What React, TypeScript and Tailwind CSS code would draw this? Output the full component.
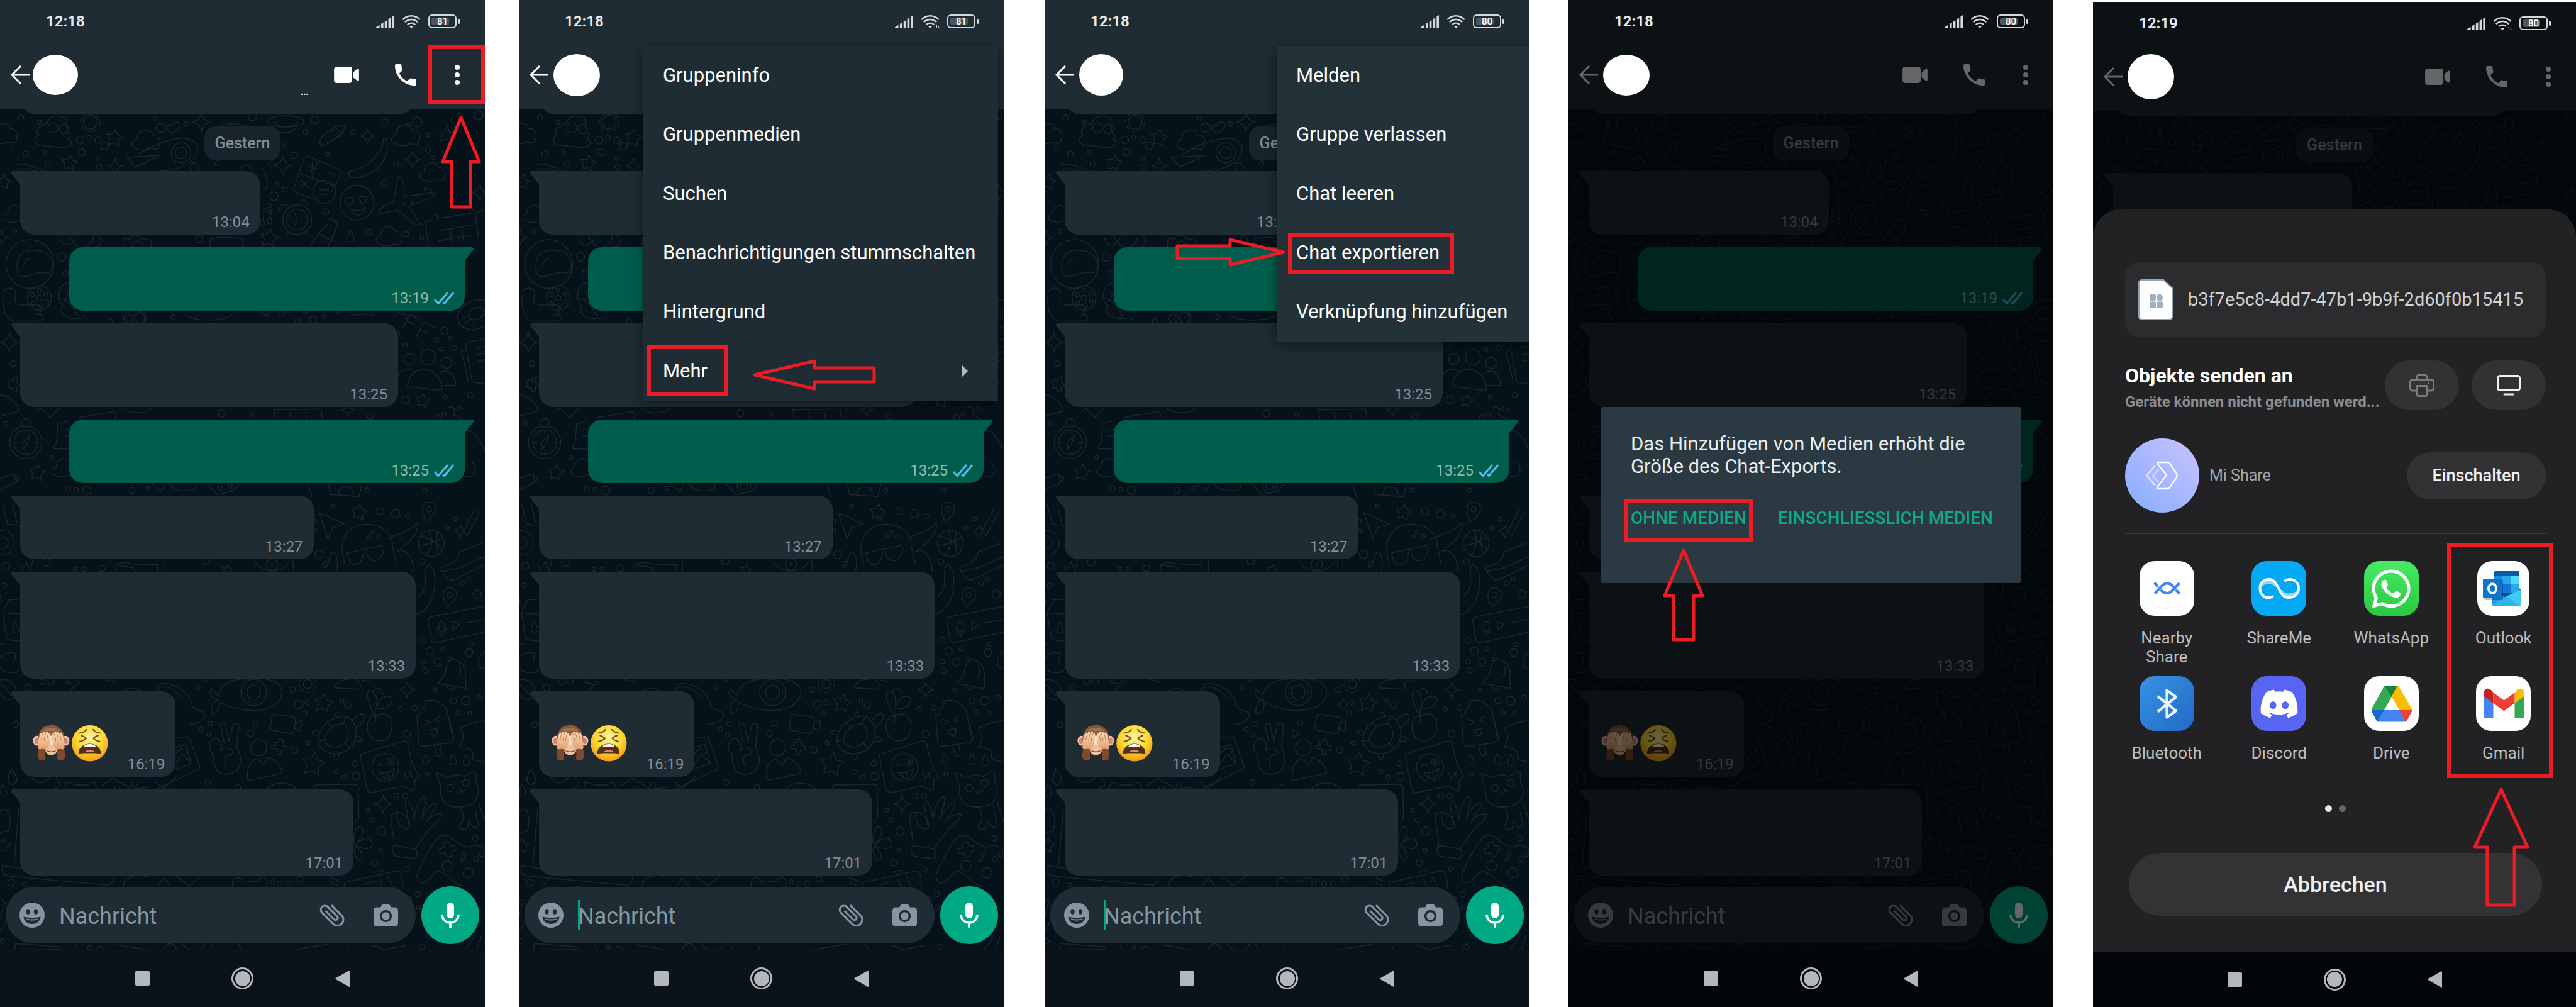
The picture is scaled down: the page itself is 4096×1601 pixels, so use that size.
import React, { useId } from "react";
import { FaDiscord, FaWhatsapp } from "react-icons/fa";

/* ---------- Chat wallpaper ---------- */

type Pt = number[];

const starPoints = (x: number, y: number, r: number) => {
  const pts: string[] = [];
  for (let i = 0; i < 10; i++) {
    const a = -Math.PI / 2 + 0.15 + (i * Math.PI) / 5;
    const k = i % 2 === 0 ? r : r * 0.52;
    pts.push(`${(x + Math.cos(a) * k).toFixed(1)},${(y + Math.sin(a) * k).toFixed(1)}`);
  }
  return pts.join(" ");
};

const Star = ({ p }: { p: Pt }) => <polygon points={starPoints(p[0], p[1], p[2])} />;

const Spark = ({ p }: { p: Pt }) => {
  const [x, y, r] = p;
  const k = r * 0.14;
  return (
    <path
      d={`M${x} ${y - r}Q${x + k} ${y - k} ${x + r} ${y}Q${x + k} ${y + k} ${x} ${y + r}Q${x - k} ${y + k} ${x - r} ${y}Q${x - k} ${y - k} ${x} ${y - r}Z`}
    />
  );
};

const Cloud = ({ p }: { p: Pt }) => (
  <path
    transform={`translate(${p[0]} ${p[1]}) scale(${p[2] / 90})`}
    d="M-32 28C-52 26-48 0-30 0C-32-32 10-44 20-14C36-20 50 6 40 16C44 30 24 34 14 26C4 34-18 36-32 28Z"
  />
);

const Drop = ({ p }: { p: Pt }) => (
  <path
    transform={`translate(${p[0]} ${p[1]}) scale(${p[2] / 20})`}
    d="M-4-20C8-6 14 4 10 14C4 24-12 22-12 8C-12-2-6-10-4-20Z"
  />
);

const Pin = ({ p }: { p: Pt }) => (
  <g transform={`translate(${p[0]} ${p[1]}) rotate(12)`}>
    <path d="M0 34C-30 4-26-26 0-26C26-26 30 4 0 34Z" />
    <circle cx={0} cy={-4} r={8} />
  </g>
);

const Face = ({ p, children }: { p: Pt; children?: React.ReactNode }) => (
  <g transform={`translate(${p[0]} ${p[1]})`}>
    <circle r={p[2]} />
    {children}
  </g>
);

const upperDots: Pt[] = [
  [67, 366, 8], [125, 380, 6], [492, 368, 6], [510, 398, 14], [590, 385, 6], [802, 362, 14], [1000, 374, 12],
  [970, 412, 7], [1222, 380, 10], [1298, 388, 6], [1325, 380, 15], [1462, 362, 8], [1520, 358, 14], [1120, 411, 7],
  [255, 436, 12], [283, 429, 7], [312, 437, 10], [260, 474, 11], [82, 480, 9], [142, 474, 6], [152, 512, 8],
  [332, 455, 12], [310, 493, 6], [315, 520, 9], [618, 521, 14], [690, 508, 7], [905, 455, 7], [933, 484, 9],
  [862, 512, 9], [1040, 480, 6], [1358, 421, 6], [1360, 465, 9], [1375, 490, 6], [1258, 512, 8], [880, 574, 6],
  [870, 611, 13], [904, 591, 8], [855, 640, 7], [1035, 659, 9], [1220, 569, 9], [1172, 722, 9], [1290, 730, 8],
  [1340, 740, 6], [632, 744, 11], [48, 720, 6], [196, 800, 13], [209, 850, 8], [350, 1000, 8], [550, 987, 7],
  [895, 974, 10], [945, 998, 8], [970, 970, 6], [994, 996, 11], [1030, 985, 6], [1075, 970, 6], [1412, 1031, 12],
  [1387, 1057, 6], [1442, 1083, 8], [1402, 1087, 6], [1430, 1053, 6], [1262, 1040, 8], [1287, 1074, 6],
  [42, 1132, 9], [1493, 1230, 8], [1415, 1237, 6], [1287, 1245, 12], [704, 1287, 11], [800, 1290, 6],
  [20, 1318, 6], [165, 1425, 6], [54, 1489, 7], [216, 1521, 8], [276, 1527, 13], [242, 1525, 7], [1165, 1527, 7],
  [1350, 1527, 7], [420, 1527, 9], [470, 1520, 6], [1410, 1290, 6], [1390, 1300, 9], [1176, 1297, 9],
];

const lowerDots: Pt[] = [
  [1208, 24, 11], [1257, 32, 13], [1294, 40, 7], [1447, 48, 6], [1420, 75, 6], [1013, 158, 13], [1035, 187, 7],
  [1056, 8, 5], [1000, 55, 6], [1000, 85, 6], [1340, 180, 9], [148, 183, 12], [20, 195, 12], [323, 202, 10],
  [238, 205, 6], [265, 205, 7], [655, 180, 11], [15, 255, 7], [1468, 248, 8], [1516, 282, 13], [1488, 235, 6],
  [1345, 426, 9], [1405, 452, 6], [1365, 460, 12], [1345, 492, 7], [1350, 520, 8], [1390, 494, 12], [1428, 484, 6],
  [1490, 464, 12], [1497, 438, 7], [1383, 580, 5], [628, 573, 7], [930, 580, 8], [655, 550, 6], [88, 573, 10],
  [135, 555, 9], [162, 553, 10], [948, 626, 13], [976, 620, 7], [968, 651, 7], [1087, 615, 6], [1106, 629, 9],
  [1272, 640, 7], [1318, 636, 8], [1440, 614, 10], [1480, 614, 14], [1523, 603, 7], [1492, 652, 6], [1455, 650, 7],
  [1293, 717, 11], [668, 685, 7], [640, 703, 7], [663, 720, 6], [812, 685, 8], [796, 715, 10], [979, 745, 6],
  [937, 767, 10], [1068, 834, 7], [1092, 852, 7], [1131, 849, 12], [1127, 810, 8], [1356, 843, 6], [660, 867, 8],
  [756, 883, 9], [427, 875, 8], [372, 887, 8], [1259, 909, 8], [1288, 911, 8], [1169, 955, 6], [1184, 986, 7],
  [1211, 1020, 13], [1209, 1080, 6], [1190, 1119, 10], [1290, 1138, 7], [1510, 1042, 8], [1512, 1107, 8],
  [1420, 1128, 16], [1487, 1150, 16], [1530, 1092, 7], [35, 1181, 11], [78, 1187, 7], [953, 1170, 10],
  [915, 1184, 8], [888, 1184, 8], [866, 1178, 7], [1328, 1216, 8], [1300, 1230, 7], [1330, 1258, 6], [7, 1363, 7],
  [1362, 1345, 9], [1340, 1380, 8], [284, 1382, 6], [318, 1388, 10], [50, 688, 9],
];

function Wallpaper() {
  return (
    <svg
      aria-hidden="true"
      className="absolute inset-0 h-full w-full"
      viewBox="0 174 771 1336"
      preserveAspectRatio="xMidYMin slice"
      fill="none"
      stroke="#1a272e"
      strokeWidth={3}
      strokeLinejoin="round"
      strokeLinecap="round"
    >
      <g transform="scale(.5006 .5106)">
        {upperDots.map((d, i) => (
          <circle key={i} cx={d[0]} cy={d[1]} r={d[2]} />
        ))}
        {[[363, 430, 28], [220, 508, 26], [12, 567, 24], [855, 742, 30], [1418, 420, 26], [118, 1472, 26], [1341, 1248, 22]].map((p, i) => (
          <Star key={i} p={p} />
        ))}
        {[[640, 380, 30], [365, 517, 24], [898, 515, 30], [1168, 424, 22], [1310, 497, 26], [30, 1066, 32], [1105, 1276, 20], [5, 740, 22], [1525, 600, 26]].map((p, i) => (
          <Spark key={i} p={p} />
        ))}
        {[[12, 415, 90], [465, 435, 90], [1290, 420, 92], [1375, 535, 82], [1237, 735, 84], [50, 665, 74], [205, 1455, 80]].map((p, i) => (
          <Cloud key={i} p={p} />
        ))}
        <Drop p={[40, 467, 10]} />
        <Drop p={[1115, 735, 18]} />
        {/* swirl, gear, heart, ringed planet */}
        <path d="M150 384C160 350 200 360 212 372C206 388 216 400 212 412C232 420 220 434 214 434C240 440 224 462 200 460L130 452C104 448 104 424 124 422C104 404 130 390 150 384Z" />
        <circle cx={168} cy={398} r={16} />
        <circle cx={203} cy={402} r={15} />
        <circle cx={287} cy={380} r={22} />
        <circle cx={287} cy={380} r={30} strokeDasharray="14 9" />
        <path d="M545 415C520 395 532 384 546 392C554 374 574 378 572 390C572 404 556 412 545 415Z" />
        <ellipse cx={907} cy={378} rx={58} ry={18} />
        <path d="M870 378C880 398 930 402 946 378M870 394C884 420 930 420 942 394" />
        {/* pan, pizza slice */}
        <path d="M440 480C500 440 600 410 625 450C640 500 580 540 450 534M404 490L508 484L430 520Z" />
        <circle cx={575} cy={476} r={31} />
        <circle cx={575} cy={476} r={18} />
        <path d="M700 394C730 380 760 386 780 394M760 530C780 500 800 510 800 540M830 520C860 560 850 600 826 600M50 514C70 500 130 530 146 534M60 528C80 520 100 530 120 534" />
        {/* hot dog, banana */}
        <path d="M1020 454C1000 430 1060 390 1090 390C1110 400 1050 450 1020 454ZM1050 414L1070 400M1060 424L1082 406M1072 430L1092 412" />
        <path d="M1218 430C1216 470 1180 520 1110 534C1100 548 1120 556 1140 552C1210 540 1240 480 1228 432Z" />
        {/* calculator */}
        <path d="M970 488C975 484 980 486 984 488L1078 528C1086 532 1086 536 1084 542L1052 600M996 620L940 600C932 596 932 590 934 584L966 492M950 540L1066 580M1010 500L988 560M976 518L1006 526M992 506L990 538M1040 534L1064 544M954 560L980 584M980 558L956 584" />
        <circle cx={1030} cy={597} r={36} />
        <path d="M1016 590L1044 592M1014 604L1042 606" />
        <Face p={[1134, 631, 54]}>
          <path d="M-24 12C-46-4-38-18-26-12C-18-22-4-16-24 12ZM18 6C2-14 8-24 18-18C28-28 40-12 18 6ZM-18 20C0 28 14 24 26 14C26 44-8 48-18 20Z" />
        </Face>
        {/* airplane */}
        <path d="M1264 552C1276 540 1286 580 1284 612L1350 604L1380 598C1386 606 1370 618 1356 620L1300 644L1336 698L1320 700L1262 654L1206 666C1196 660 1204 646 1250 628ZM1350 604L1348 586L1368 590L1372 600" />
        <circle cx={1286} cy={636} r={4} />
        <circle cx={1310} cy={630} r={4} />
        {/* alarm clock, notes, bottle */}
        <circle cx={944} cy={684} r={46} />
        <circle cx={944} cy={684} r={33} />
        <path d="M936 662L944 684L934 704M888 654C884 640 904 632 914 640M956 630C960 616 974 622 976 636M918 724L910 734M972 724L978 734" />
        <path d="M836 690L838 648L862 656L858 684M838 656L862 664" />
        <ellipse cx={834} cy={694} rx={7} ry={9} />
        <ellipse cx={856} cy={688} rx={7} ry={9} />
        <path d="M1046 684L1070 694L1066 720L1040 770M1040 684C1048 674 1064 680 1070 694M1042 696L1012 726L984 770M1012 726L1052 750" />
        <Drop p={[1028, 742, 12]} />
        {/* calendar */}
        <path d="M1350 690L1376 684M1390 680L1500 664M1350 690L1362 770M1510 664L1536 654M1510 664L1520 740M1376 672C1382 660 1390 664 1390 684M1490 656C1496 644 1504 650 1506 664M1390 720L1500 700M1394 750L1500 732M1430 714L1436 770M1466 706L1474 760" />
        {/* planet and helmet */}
        <circle cx={95} cy={822} r={76} />
        <path d="M60 800C80 770 120 780 140 784C172 800 176 850 150 850C110 840 70 880 56 850C52 830 54 810 60 800ZM74 826C80 812 84 806 96 804" />
        <circle cx={125} cy={928} r={38} />
        {[[125, 928, 9], [104, 918, 6], [124, 904, 6], [146, 916, 6], [148, 938, 6], [130, 952, 6], [106, 944, 6]].map((c, i) => (
          <circle key={i} cx={c[0]} cy={c[1]} r={c[2]} />
        ))}
        <path d="M12 910C20 890 50 896 50 910L48 940M10 920C8 960 16 990 40 1000L120 1000C146 996 140 980 120 980M60 950L120 950C140 956 130 980 110 980" />
        <path d="M214 880C180 890 180 940 200 950C180 980 230 1000 250 990C240 970 220 930 190 930M206 906C220 910 214 930 204 934M254 992C264 986 280 990 278 996" />
        <path d="M190 740C200 780 236 760 240 740M220 734C230 760 260 780 270 768C290 760 300 740 296 732M310 734C330 750 320 770 300 768M392 740L390 768M392 742L412 744C420 728 444 730 446 742L482 748L480 768M420 768C424 744 448 744 452 768" />
        <circle cx={408} cy={992} r={14} />
        <circle cx={446} cy={990} r={18} />
        <path d="M392 992C400 1010 416 1012 418 1000M440 970C464 976 462 1000 450 1010" />
        <path d="M670 744C680 736 760 740 774 744L770 768M668 744L666 768M590 980C610 1000 700 1004 740 980M832 970C840 990 860 980 856 970M1110 975C1130 990 1170 970 1186 984" />
        {/* balloons, donut, notes sheet */}
        <path d="M1250 990C1270 960 1300 980 1290 1000M1280 1020L1302 980L1332 992M1292 1000L1316 1010M1322 1050L1344 1004L1382 1020M1334 1028L1358 1038" />
        <ellipse cx={1512} cy={980} rx={60} ry={44} transform="rotate(-20 1512 980)" />
        <ellipse cx={1512} cy={976} rx={26} ry={18} transform="rotate(-20 1512 976)" />
        <path d="M1470 984L1480 990M1480 1004L1490 998M1500 1016L1508 1008M1540 1056L1500 1062C1484 1064 1478 1074 1480 1084L1500 1190L1540 1196M1510 1084L1540 1078M1516 1104L1540 1100M1520 1124L1540 1120M1474 1090L1466 1094L1490 1198" />
        {/* people */}
        <circle cx={1360} cy={1112} r={24} />
        <circle cx={1300} cy={1118} r={17} />
        <circle cx={1418} cy={1130} r={17} />
        <path d="M1294 1204C1300 1130 1400 1130 1404 1216L1300 1204M1260 1184C1266 1148 1300 1140 1320 1160M1396 1164C1420 1140 1450 1170 1448 1200L1404 1200" />
        {/* plaster, compass, bubble */}
        <path d="M24 1206L30 1196L24 1190L34 1180L42 1188L44 1174L56 1176L52 1190L64 1198L52 1206L54 1220L42 1220L40 1210ZM0 1230C30 1230 60 1260 60 1280L0 1296M130 1270L160 1300L190 1270M120 1280L130 1270" />
        <circle cx={82} cy={1377} r={51} />
        <circle cx={82} cy={1377} r={38} />
        <circle cx={82} cy={1318} r={14} />
        <path d="M72 1378L96 1354L88 1376L74 1400ZM82 1342V1350M82 1404V1412M48 1378H56M108 1378H116" />
        <path d="M218 1310L184 1320L178 1382C168 1390 168 1396 174 1398L214 1398M250 1300L360 1282C370 1284 370 1296 364 1308M220 1336L200 1340M220 1356L200 1360" />
        <path d="M390 1272C410 1290 460 1290 480 1272M0 1490L40 1476C60 1480 60 1500 46 1504L0 1526M870 1272L874 1304M870 1276L1020 1274L1024 1304M920 1284L924 1304M970 1284L974 1304M1424 1270C1440 1260 1450 1280 1440 1290L1468 1306M1440 1270L1460 1280M1452 1264L1474 1276M1480 1340C1510 1340 1530 1380 1536 1400M1500 1440C1520 1460 1510 1490 1478 1482" />
        <path d="M484 1508L512 1530L524 1508M540 1508C560 1540 640 1530 620 1508M660 1508L690 1540L740 1530L760 1508M980 1508L990 1546M1044 1508L1050 1540L1140 1546L1150 1508M1076 1540C1070 1508 1126 1508 1122 1540" />
        <circle cx={715} cy={1512} r={22} />
        <circle cx={715} cy={1512} r={12} />
      </g>
      <g transform="translate(0 800.6) scale(.5006 .5106)">
        {lowerDots.map((d, i) => (
          <circle key={i} cx={d[0]} cy={d[1]} r={d[2]} />
        ))}
        {[[1140, 28, 26], [1027, 622, 30], [995, 812, 38], [8, 1065, 24], [722, 208, 18]].map((p, i) => (
          <Star key={i} p={p} />
        ))}
        {[[1293, 580, 24], [1217, 936, 28]].map((p, i) => (
          <Spark key={i} p={p} />
        ))}
        {[[40, 850, 24], [12, 893, 18], [1354, 796, 16], [1440, 796, 18], [1482, 798, 18], [50, 385, 18]].map((p, i) => (
          <Drop key={i} p={p} />
        ))}
        <Pin p={[1362, 22]} />
        <Pin p={[1428, 288]} />
        {/* ball, paper plane */}
        <circle cx={1370} cy={124} r={41} />
        <path d="M1338 100C1370 110 1400 130 1404 146M1362 84C1380 110 1370 150 1350 160M1334 130C1360 130 1400 110 1404 104M1390 88C1380 120 1390 150 1392 158" />
        <path d="M1014 28L1094 64L1058 74L1042 110Z" />
        {/* friendly monster with sunglasses */}
        <path d="M1096 188C1070 120 1100 66 1166 64C1220 66 1250 100 1246 130L1260 190M1230 110C1270 90 1300 90 1326 60C1330 80 1320 110 1260 150C1300 130 1320 200 1310 212M1360 190C1396 200 1390 330 1320 346M1360 190C1340 210 1370 260 1330 290" />
        <path d="M1100 154L1216 130M1104 156C1106 200 1150 206 1156 150M1164 146C1166 190 1216 190 1220 136" />
        <circle cx={1184} cy={88} r={6} />
        <circle cx={1172} cy={102} r={5} />
        <circle cx={1202} cy={102} r={6} />
        {/* sneaker, ticks */}
        <path d="M1400 200C1420 190 1450 190 1460 150L1530 124M1400 200C1410 230 1430 240 1440 238L1540 190M1404 212L1460 200L1540 164M1448 84L1462 104L1506 20M1462 70L1484 100L1524 26M1446 84L1466 72" />
        {/* cups and curves */}
        <path d="M1028 200C1050 200 1040 150 1060 150C1080 170 1070 200 1070 210M930 170L932 208M810 180C830 220 900 220 920 180M60 190L70 206L84 180L96 210L104 178M368 210C360 180 400 180 420 188L500 190V210M520 180V210M370 190C390 200 420 190 430 210" />
        <circle cx={864} cy={190} r={18} />
        <circle cx={864} cy={190} r={3} />
        {/* gear and book at the left edge */}
        <circle cx={8} cy={122} r={18} />
        <circle cx={8} cy={122} r={38} strokeDasharray="18 10" />
        <path d="M8 0L24 64L60 68M40 2L54 60" />
        {/* milk carton */}
        <path d="M0 284L4 310M62 298L28 300L8 340L22 420C30 428 50 426 62 428M8 340L62 344M0 440L12 436M0 480C20 460 50 460 50 470L44 500M0 510C10 530 50 530 62 520" />
        {/* voice card */}
        <path d="M1540 320L1372 352C1360 356 1358 362 1360 370L1370 424C1372 432 1380 434 1388 432L1540 400M1438 366L1462 378L1438 392ZM1478 372L1540 360" />
        <path d="M1394 376C1394 366 1408 364 1410 374L1412 392C1410 402 1396 400 1396 392ZM1388 386C1390 414 1418 410 1418 384M1404 404V414" />
        {/* bell */}
        <path d="M1392 560L1414 530C1418 500 1424 484 1440 486C1466 490 1482 510 1478 540L1480 576ZM1420 570C1424 582 1440 584 1444 572M1460 506C1466 520 1464 530 1456 540M1540 460C1510 480 1516 520 1540 514" />
        {/* leaves, lightning */}
        <path d="M0 550C20 540 60 560 50 600C40 620 10 610 0 590M0 560L60 620M220 546L206 556L236 562L226 580L256 556L240 554M336 548L370 556M392 584C410 572 440 574 450 586M500 564C540 550 600 580 610 630C620 650 650 640 650 660C640 680 620 690 604 686M498 586C500 566 540 560 580 604" />
        {/* avocado */}
        <path d="M693 600C700 560 740 546 780 546C840 540 896 550 896 590C890 650 780 660 700 620M693 600C670 570 676 580 668 582C666 600 680 610 693 610C670 620 666 650 676 656C694 650 700 640 696 612" />
        <circle cx={806} cy={588} r={41} />
        <circle cx={806} cy={588} r={32} strokeDasharray="2 14" />
        <circle cx={806} cy={588} r={22} />
        <circle cx={977} cy={562} r={14} />
        <circle cx={977} cy={562} r={26} strokeDasharray="10 8" />
        <path d="M1064 574C1070 550 1100 546 1110 548M1064 574L1142 578C1150 560 1140 552 1130 548M1150 550L1174 554" />
        {/* video camera, peace hand, portrait */}
        <path d="M870 656L930 664C938 666 940 672 938 678L934 708C932 716 926 718 920 716L866 706C858 704 858 698 860 690L864 664C864 658 866 656 870 656ZM938 684L958 674L954 708L936 700" />
        <path d="M712 744L700 690C700 680 714 682 716 690L728 740L740 690C746 680 760 684 758 694L752 760C770 790 770 830 730 842C690 850 676 820 678 780C660 770 660 740 680 732C700 730 710 750 700 770M700 770C720 750 750 770 736 780C710 782 710 800 718 820" />
        <circle cx={822} cy={760} r={25} />
        <path d="M788 862C780 820 800 800 816 794L838 814L850 790C880 800 896 820 896 840Z" />
        <path d="M872 742L884 744L888 732L900 738L896 752L910 756L908 768L894 768L892 782L880 780L882 766L864 762L862 752L876 754Z" />
        {/* picture frames */}
        <path d="M560 728L600 726L634 818C634 826 628 828 620 832L500 888M556 760L590 750L608 810L558 826M558 810L580 780L606 806M556 780C580 750 610 760 590 780M490 862L520 888L560 850" />
        {/* turtle */}
        <path d="M1010 740C1010 690 1060 660 1100 662C1140 680 1140 740 1110 764C1070 790 1020 780 1010 740ZM1030 736C1036 706 1060 684 1090 686C1112 700 1110 730 1094 746C1066 766 1040 760 1030 736ZM1066 662C1064 644 1080 646 1080 662M1120 676C1136 650 1160 650 1158 666C1150 690 1140 690 1132 696M1136 724C1160 730 1156 742 1130 740M1060 778C1060 806 1076 800 1078 776M1014 720C990 724 980 706 1010 706M1030 736L1010 740M1054 700L1040 680M1090 686L1100 664M1094 746L1110 762" />
        {/* plant */}
        <path d="M1190 664C1180 640 1160 600 1170 582C1190 580 1200 600 1196 630M1184 590C1194 570 1210 570 1216 592M1196 640C1200 600 1240 590 1246 610C1240 640 1210 640 1192 640L1194 680" />
        <path d="M1194 660C1160 660 1156 720 1190 736C1240 750 1250 700 1244 680C1236 650 1206 650 1194 664" />
        {/* ice lolly */}
        <path d="M1350 614C1390 606 1420 630 1424 660L1442 730C1440 742 1430 744 1420 746L1344 756C1334 754 1330 750 1330 740L1324 660C1336 660 1340 650 1336 640C1350 640 1352 626 1350 614ZM1378 750L1386 784C1394 788 1404 784 1402 776L1396 748M1420 640L1436 720M1348 672L1364 680L1350 690M1394 664L1380 674L1394 680M1360 706L1390 700M1368 706C1370 730 1390 730 1388 702" />
        {/* winking sticker */}
        <path d="M1146 780L1280 740C1290 738 1296 742 1296 752L1310 812L1332 850L1318 860L1316 896L1280 880L1180 900C1170 900 1166 892 1164 882L1146 790ZM1284 836L1290 856M1298 834L1310 852M1290 856L1310 834" />
        <Face p={[1224, 821, 43]}>
          <circle cx={16} cy={-16} r={11} />
          <circle cx={16} cy={-16} r={4} />
          <path d="M-26-4C-20-12-12-10-8-6M-18 16C0 20 16 14 28 4C30 36-4 50-18 16ZM-6 18L-2 34M8 16L12 34" />
        </Face>
        {/* cat */}
        <path d="M1400 880L1386 842C1390 836 1400 844 1420 854C1440 844 1460 842 1474 850L1504 832C1514 834 1510 850 1512 870C1530 900 1516 940 1470 944C1420 950 1396 930 1400 880ZM1460 944C1470 960 1480 990 1460 1000C1456 1014 1470 1016 1484 1012C1490 1000 1484 990 1490 986C1500 1010 1510 1016 1520 1000L1510 960M1520 930L1540 990" />
        <circle cx={1430} cy={886} r={11} />
        <circle cx={1480} cy={870} r={11} />
        <path d="M1450 896C1456 904 1462 900 1462 890C1470 900 1476 896 1476 890" />
        <path d="M1460 700C1480 690 1500 680 1540 676M1460 700C1480 720 1470 740 1460 760C1490 760 1510 770 1500 790C1510 806 1530 800 1540 806" />
        {/* hand */}
        <path d="M1252 1070C1254 1030 1230 970 1250 964C1280 950 1310 990 1300 1010C1280 1020 1260 1000 1260 966M1296 1000C1300 970 1280 930 1290 926C1300 920 1310 950 1316 980C1320 940 1340 910 1350 914C1360 924 1340 960 1340 980C1350 950 1380 926 1386 934C1390 944 1360 980 1356 990C1370 970 1400 960 1404 970C1400 990 1360 1010 1356 1024L1320 1074M1252 1064L1320 1076C1328 1080 1326 1104 1316 1106L1256 1098C1244 1092 1244 1070 1252 1064Z" />
        {/* clover, laptop corner */}
        <path d="M1126 1060C1120 1030 1130 1006 1146 1006C1160 1014 1150 1040 1130 1064C1160 1030 1180 1040 1182 1060C1184 1080 1160 1076 1130 1066C1160 1090 1150 1110 1140 1112C1130 1104 1124 1090 1126 1070M1000 888C990 880 1000 874 1010 876L1124 874C1136 874 1140 880 1138 890L1140 976C1138 986 1130 990 1124 990M846 890C870 864 920 864 942 890" />
        {/* game pad */}
        <path d="M1324 1160C1340 1120 1370 1060 1396 1036C1430 1020 1450 1070 1490 1070C1500 1060 1530 1064 1540 1080M1324 1160C1330 1190 1350 1190 1380 1150C1410 1130 1440 1190 1470 1190M1408 1060L1424 1052L1430 1066L1444 1066L1446 1080L1434 1086L1434 1098L1420 1102L1414 1088L1398 1090L1396 1076L1410 1072ZM1472 1084L1480 1086L1470 1114L1462 1112Z" />
        {/* clock radio, keyboard, odds and ends below the last message */}
        <path d="M1096 1180L1260 1144C1270 1146 1274 1150 1276 1160L1280 1200M1096 1180L1090 1200M1190 1150C1200 1138 1216 1140 1220 1148M1150 1186L1190 1176M1204 1170L1216 1200M1230 1160L1246 1190" />
        <path d="M60 950L44 1130M0 960C30 930 40 990 26 1020L0 1024M8 1128L240 1160M8 1128C4 1150 10 1156 30 1160L340 1188C354 1188 364 1176 360 1162M392 1194C390 1170 420 1150 466 1162M500 1190L520 1166L540 1190M740 1194C730 1170 760 1150 770 1180L820 1176C830 1150 860 1170 846 1194M560 1160L600 1190L640 1160M1050 1164L1078 1176M1050 1180L1070 1188M180 1194L200 1190" />
        <path d="M180 854C190 870 200 880 172 888M206 890L210 866C240 880 280 880 300 866L310 890M100 850C120 880 140 870 160 852M320 880L360 856L420 890M430 888L470 884" />
        <path d="M0 1230C30 1240 30 1300 0 1330M0 1290L10 1250M46 1390L50 1370L190 1380V1388L70 1386M240 1374L248 1390M370 1374L460 1388M520 1388C530 1360 560 1370 560 1388M580 1370C600 1400 640 1400 650 1372M670 1372L680 1388M760 1372L764 1388M940 1388L1040 1372M1100 1374L1110 1388M1180 1374L1220 1388L1290 1376M1510 1344L1480 1388M1530 1344L1514 1388" />
      </g>
    </svg>
  );
}

/* ---------- Small icons ---------- */

const svgBase = { "aria-hidden": true } as const;

const BackIcon = () => (
  <svg {...svgBase} viewBox="0 0 32 32" className="h-8 w-8" fill="none" stroke="currentColor" strokeWidth={3}>
    <path d="M31 16H3M17 2L3 16L17 30" />
  </svg>
);

const VideoIcon = () => (
  <svg {...svgBase} viewBox="0 0 168 110" className="h-[26px] w-10" fill="currentColor">
    <rect width={122} height={110} rx={18} />
    <path d="M129 38L154 17C160 13 168 14 168 22V88C168 96 160 98 154 92L129 73Z" />
  </svg>
);

const PhoneIcon = () => (
  <svg {...svgBase} viewBox="3 3 18 18" className="h-[34px] w-[34px]" fill="currentColor">
    <path d="M6.62 10.79c1.44 2.83 3.76 5.14 6.59 6.59l2.2-2.2c.27-.27.67-.36 1.02-.24 1.12.37 2.33.57 3.57.57.55 0 1 .45 1 1V20c0 .55-.45 1-1 1-9.39 0-17-7.61-17-17 0-.55.45-1 1-1h3.5c.55 0 1 .45 1 1 0 1.25.2 2.45.57 3.57.11.35.03.74-.25 1.02l-2.2 2.2z" />
  </svg>
);

const MoreIcon = () => (
  <svg {...svgBase} viewBox="0 0 8 32" className="h-8 w-2" fill="currentColor">
    <circle cx={4} cy={4} r={4} />
    <circle cx={4} cy={16} r={4} />
    <circle cx={4} cy={28} r={4} />
  </svg>
);

const SmileIcon = () => (
  <svg {...svgBase} viewBox="0 0 40 40" className="h-10 w-10 shrink-0">
    <circle cx={20} cy={20} r={20} fill="#8696a0" />
    <ellipse cx={13.5} cy={14.5} rx={3.2} ry={4.2} fill="#1f2c34" />
    <ellipse cx={26} cy={14.5} rx={3.2} ry={4.2} fill="#1f2c34" />
    <path d="M6.5 22.5C15 24.5 25 24.5 33.5 22.5C33 29.5 27.5 34 20 34C12.5 34 7 29.5 6.5 22.5Z" fill="#1f2c34" />
    <path d="M10 25.5C16 26.8 24 26.8 30 25.5C27.5 29.5 12.5 29.5 10 25.5Z" fill="#8696a0" />
  </svg>
);

const ClipIcon = () => (
  <svg {...svgBase} viewBox="0 0 24 24" className="h-12 w-12" fill="#8696a0">
    <path
      transform="rotate(-45 12 12)"
      d="M16.5 6v11.5c0 2.21-1.79 4-4 4s-4-1.79-4-4V5c0-1.38 1.12-2.5 2.5-2.5s2.5 1.12 2.5 2.5v10.5c0 .55-.45 1-1 1s-1-.45-1-1V6H10v9.5c0 1.38 1.12 2.5 2.5 2.5s2.5-1.12 2.5-2.5V5c0-2.21-1.79-4-4-4S7 2.79 7 5v12.5c0 3.04 2.46 5.5 5.5 5.5s5.5-2.46 5.5-5.5V6h-1.5z"
    />
  </svg>
);

const CameraIcon = () => (
  <svg {...svgBase} viewBox="0 0 39 36" className="h-9 w-[39px]">
    <path
      fill="#8696a0"
      d="M12 4C13 1.5 14.5 0 17 0H22C24.5 0 26 1.5 27 4L28 5.5H33C37 5.5 39 7.5 39 11V30C39 34 37 36 33 36H6C2 36 0 34 0 30V11C0 7.5 2 5.5 6 5.5H11Z"
    />
    <circle cx={19.5} cy={19.5} r={9.7} fill="#1f2c34" />
    <circle cx={19.5} cy={19.5} r={6.2} fill="#8696a0" />
  </svg>
);

const MicIcon = () => (
  <svg {...svgBase} viewBox="0 0 30 41" className="h-[41px] w-[30px]" fill="none" stroke="white" strokeWidth={3.6}>
    <rect x={9} y={0} width={12} height={25} rx={6} fill="white" stroke="none" />
    <path d="M2 19C2 26.5 7.5 32 15 32C22.5 32 28 26.5 28 19M15 32V41" />
  </svg>
);

const Ticks = () => (
  <svg {...svgBase} viewBox="0 0 32 20" className="h-5 w-8" fill="none" stroke="#53bdeb" strokeWidth={3}>
    <path d="M1 12L7 18.5L22 1M14 16.5L16.5 18.5L31 1" />
  </svg>
);

const Emojis = () => {
  const id = useId();
  return (
    <svg viewBox="98 112 506 252" className="h-[60px] w-[120px]" role="img" aria-label="Affe hält sich die Augen zu, erschöpftes Gesicht">
      <defs>
        <radialGradient id={`${id}f`} cx=".5" cy=".35" r=".65">
          <stop offset="0" stopColor="#fff3a6" />
          <stop offset=".55" stopColor="#fdda32" />
          <stop offset="1" stopColor="#f39a1c" />
        </radialGradient>
        <linearGradient id={`${id}h`} x1="0" y1="0" x2="0" y2="1">
          <stop offset="0" stopColor="#ffdcb4" />
          <stop offset="1" stopColor="#e0a070" />
        </linearGradient>
      </defs>
      <ellipse cx={126} cy={224} rx={26} ry={33} fill="#f6c9a4" />
      <ellipse cx={318} cy={224} rx={26} ry={33} fill="#f6c9a4" />
      <ellipse cx={124} cy={226} rx={15} ry={22} fill="#d98082" />
      <ellipse cx={320} cy={226} rx={15} ry={22} fill="#d98082" />
      <path d="M134 220C130 160 170 120 206 122L222 114L228 120L250 116L246 124C290 132 314 170 310 220C308 280 270 300 222 300C174 300 136 280 134 220Z" fill="#87573a" />
      <path d="M160 160C180 130 250 128 280 158Z" fill="#a3714c" />
      <ellipse cx={222} cy={274} rx={44} ry={46} fill="#f0c198" />
      <path d="M190 286C204 298 240 298 256 286C250 306 196 306 190 286Z" fill="#6d3a22" />
      <path d="M214 190H230L234 250H210Z" fill="#f7e3cd" />
      <path d="M136 282C160 274 184 280 186 286C180 310 182 330 184 346C178 362 144 360 136 344C130 330 132 300 136 282Z" fill="#7d4a2c" />
      <path d="M310 282C286 274 262 280 260 286C266 310 264 330 262 346C268 362 302 360 310 344C316 330 314 300 310 282Z" fill="#7d4a2c" />
      <path
        d="M132 270C136 240 134 200 150 176C156 166 166 170 166 174C170 164 182 162 186 170C192 160 204 164 204 172C212 168 218 176 217 184C216 210 212 240 206 256C198 274 190 284 182 282C166 274 148 286 138 280Z"
        fill={`url(#${id}h)`}
      />
      <path
        d="M312 270C308 240 310 200 294 176C288 166 278 170 278 174C274 164 262 162 258 170C252 160 240 164 240 172C232 168 228 176 229 184C230 210 234 240 240 256C248 274 256 284 264 282C280 274 298 286 308 280Z"
        fill={`url(#${id}h)`}
      />
      <path
        d="M166 176C160 190 156 206 156 218M186 172C180 190 174 206 174 222M204 174C198 190 192 206 192 224M278 176C284 190 288 206 288 218M258 172C264 190 270 206 270 222M240 174C246 190 252 206 252 224"
        stroke="#b77547"
        strokeWidth={4}
        strokeLinecap="round"
        fill="none"
      />
      <circle cx={481} cy={241} r={121} fill={`url(#${id}f)`} />
      <g fill="none" stroke="#6b4a12" strokeLinecap="round" strokeWidth={8}>
        <path d="M412 172C434 172 450 162 460 148M550 172C528 172 512 162 502 148" />
        <path d="M424 190C440 196 452 202 456 208C450 218 430 224 412 230M536 190C520 196 510 202 505 208C510 218 530 224 548 230" strokeWidth={9} />
      </g>
      <path d="M406 312C402 270 440 244 481 244C522 244 558 270 554 312C530 306 500 308 481 308C460 308 430 306 406 312Z" fill="#4d3310" />
      <path d="M436 268C446 250 464 246 481 246C498 246 516 250 524 268C500 264 460 264 436 268Z" fill="#ffffff" />
      <path d="M448 298C458 282 504 280 512 298C500 300 460 300 448 298Z" fill="#f0787c" />
    </svg>
  );
};

/* ---------- Phone parts ---------- */

function StatusBar({ time, battery, data = false }: { time: string; battery: number; data?: boolean }) {
  return (
    <div className="relative z-20 flex h-[68px] items-center justify-between pr-10 pl-[73px] text-[#e6e8e9]">
      <time className="text-2xl leading-6 font-bold">{time}</time>
      <div className="flex items-center gap-3">
        <svg {...svgBase} viewBox="0 0 120 87" className="h-[21px] w-[29px]" fill="#d6d8da">
          <path d="M0 87V80L23 65V87ZM33 87V58L48 48V87ZM57 87V44L72 34V87ZM81 87V28L96 16V87ZM105 87V10L120 0V87Z" />
        </svg>
        <svg {...svgBase} viewBox="0 0 126 90" className="h-[21px] w-[30px]" fill="none" stroke="#d6d8da" strokeWidth={10}>
          <path d="M4 31C38-3 88-3 122 31M20 48C44 24 82 24 106 48M36 65C52 50 74 50 90 65" />
          <path d="M51 78C58 71 68 71 75 78L63 90Z" fill="#d6d8da" stroke="none" />
          {data && <path d="M108 68V86M102 74L108 68M120 90V72M126 84L120 90" strokeWidth={4} />}
        </svg>
        <div className="flex items-center gap-[2px]">
          <div className="relative flex h-[22px] w-[45px] items-center justify-center rounded-md border-2 border-[#d6d8da]">
            <span className="absolute inset-y-[3px] left-[3px] w-7 rounded-sm bg-[#4c575d]" />
            <span className="relative text-[15px] leading-4 font-medium text-white">{battery}</span>
          </div>
          <span className="h-2 w-[3px] rounded-sm bg-[#d6d8da]" />
        </div>
      </div>
    </div>
  );
}

function Toolbar({ avatar, dots = false, actions = true }: { avatar: string; dots?: boolean; actions?: boolean }) {
  return (
    <div className="flex h-[106px] items-center pr-10 pb-1 pl-4 text-white">
      <button type="button" aria-label="Zurück">
        <BackIcon />
      </button>
      <div className={`relative z-20 rounded-[50%] bg-white ${avatar}`} />
      <div className="flex flex-1 justify-end self-end">
        {dots && <span className="mr-10 mb-4 text-xl leading-5">…</span>}
      </div>
      {actions && (
        <>
          <button type="button" aria-label="Videoanruf" className="mr-[57px]">
            <VideoIcon />
          </button>
          <button type="button" aria-label="Anruf" className="mr-[61px]">
            <PhoneIcon />
          </button>
          <button type="button" aria-label="Weitere Optionen">
            <MoreIcon />
          </button>
        </>
      )}
    </div>
  );
}

type Message = { time: string; box: string; sent?: boolean; emoji?: boolean };

const messages: Message[] = [
  { time: "13:04", box: "w-[54%] h-[101px]" },
  { time: "13:19", box: "w-[89%] h-[101px]", sent: true },
  { time: "13:25", box: "w-[85%] h-[133px]" },
  { time: "13:25", box: "w-[89%] h-[101px]", sent: true },
  { time: "13:27", box: "w-[66%] h-[101px]" },
  { time: "13:33", box: "w-[89%] h-[170px]" },
  { time: "16:19", box: "w-[35%] h-[136px]", emoji: true },
  { time: "17:01", box: "w-[75%] h-[137px]" },
];

function Bubble({ m }: { m: Message }) {
  return (
    <li
      className={`relative flex items-end rounded-[22px] px-[17px] pb-2 ${m.box} ${
        m.sent ? "self-end rounded-tr-none bg-[#005d4b]" : "rounded-tl-none bg-[#1f2c34]"
      }`}
    >
      <svg
        {...svgBase}
        viewBox="0 0 14 22"
        className={`absolute top-0 h-[22px] w-[14px] ${m.sent ? "left-full" : "right-full -scale-x-100"}`}
        fill={m.sent ? "#005d4b" : "#1f2c34"}
      >
        <path d="M0 0H11C14 0 15 3 13 5L0 21Z" />
      </svg>
      {m.emoji && (
        <div className="mb-4 ml-[3px]">
          <Emojis />
        </div>
      )}
      <div className="ml-auto flex items-center gap-2">
        <time className={`text-2xl leading-6 ${m.sent ? "text-[#8fb8ae]" : "text-[#818f98]"}`}>{m.time}</time>
        {m.sent && <Ticks />}
      </div>
    </li>
  );
}

function Composer({ cursor = false }: { cursor?: boolean }) {
  return (
    <form className="relative mt-auto flex items-center gap-[9px] px-[9px] pt-4 pb-[9px]" onSubmit={(e) => e.preventDefault()}>
      <div className="flex h-[90px] flex-1 items-center rounded-[45px] bg-[#1f2c34] pr-7 pl-[22px]">
        <SmileIcon />
        <div className="relative ml-[23px] flex-1">
          <input
            type="text"
            aria-label="Nachricht"
            placeholder="Nachricht"
            className="h-12 w-full bg-transparent pt-1 text-4xl leading-10 text-white outline-none placeholder:text-[#8696a0]"
          />
          {cursor && <span className="absolute inset-y-0 left-0 w-1 bg-[#00a884]" />}
        </div>
        <button type="button" aria-label="Anhang" className="mr-[42px]">
          <ClipIcon />
        </button>
        <button type="button" aria-label="Kamera">
          <CameraIcon />
        </button>
      </div>
      <button
        type="button"
        aria-label="Sprachnachricht"
        className="flex h-[92px] w-[92px] items-center justify-center rounded-full bg-[#00a884]"
      >
        <MicIcon />
      </button>
    </form>
  );
}

function NavBar({ look }: { look: string }) {
  return (
    <nav aria-label="System" className={`relative z-20 flex items-center justify-center ${look}`}>
      <button type="button" aria-label="Apps" className="h-[23px] w-[23px] rounded-xs bg-[#b5b8ba]" />
      <button
        type="button"
        aria-label="Startseite"
        className="mx-[130px] flex h-[35px] w-[35px] items-center justify-center rounded-full border-[3px] border-[#b5b8ba]"
      >
        <span className="h-6 w-6 rounded-full bg-[#b5b8ba]" />
      </button>
      <button type="button" aria-label="Zurück">
        <svg {...svgBase} viewBox="0 0 23 26" className="h-[26px] w-[23px]" fill="#b5b8ba">
          <path d="M22 0C23 0 23 1 23 1V25C23 26 22 26 22 26L1 14C0 13 0 13 1 12Z" />
        </svg>
      </button>
    </nav>
  );
}

type PhoneProps = {
  label: string;
  time: string;
  battery: number;
  data?: boolean;
  avatar: string;
  dots?: boolean;
  cursor?: boolean;
  actions?: boolean;
  dim?: boolean;
  covered?: boolean;
  frame?: string;
  nav?: string;
  children?: React.ReactNode;
};

function Phone(p: PhoneProps) {
  const visible = p.covered ? messages.slice(0, 1) : messages;
  return (
    <section aria-label={p.label} className={`relative flex flex-col overflow-hidden bg-[#1f2c34] ${p.frame ?? ""}`}>
      <header>
        <StatusBar time={p.time} battery={p.battery} data={p.data} />
        <Toolbar avatar={p.avatar} dots={p.dots} actions={p.actions} />
      </header>
      <div className="relative flex flex-1 flex-col bg-[#06121a]">
        <Wallpaper />
        <div className="relative -mt-[22px] mr-[114px] ml-[35px] h-[30px] rounded-b-[22px] bg-[#1f2c34]" />
        <div className="relative mt-[19px] flex h-[54px] items-center self-center rounded-[18px] bg-[#18242b] px-[17px] text-[25px] leading-6 font-medium text-[#7f8d96]">
          Gestern
        </div>
        <ul className="relative mx-8 mt-[17px] flex flex-col gap-5">
          {visible.map((m, i) => (
            <Bubble key={i} m={m} />
          ))}
        </ul>
        {!p.covered && <Composer cursor={p.cursor} />}
      </div>
      <NavBar look={p.nav ?? "h-[91px] bg-[#0a131a]"} />
      {p.dim && <div className="absolute inset-0 z-10 bg-black/60" />}
      {p.children}
    </section>
  );
}

/* ---------- Annotations ---------- */

const Frame = ({ at }: { at: string }) => (
  <div aria-hidden="true" className={`pointer-events-none absolute z-40 border-6 border-[#ed1c24] ${at}`} />
);

const Arrow = ({ at, box, points }: { at: string; box: string; points: string }) => (
  <svg
    {...svgBase}
    viewBox={box}
    className={`pointer-events-none absolute z-40 ${at}`}
    fill="none"
    stroke="#ed1c24"
    strokeWidth={5}
    strokeLinejoin="round"
  >
    <polygon points={points} />
  </svg>
);

/* ---------- Menus, dialog, share sheet ---------- */

function Menu({ items, look, more = false }: { items: string[]; look: string; more?: boolean }) {
  return (
    <ul className={`absolute top-[73px] z-30 shadow-[0_6px_18px_rgba(0,0,0,0.45)] ${look}`}>
      {items.map((t, i) => (
        <li key={t}>
          <button
            type="button"
            className="flex h-[94px] w-full items-center justify-between pr-12 pl-[31px] text-left text-[31px] leading-10 whitespace-nowrap text-white"
          >
            {t}
            {more && i === items.length - 1 && (
              <svg {...svgBase} viewBox="0 0 10 20" className="h-5 w-[10px]" fill="#b5bbbf">
                <path d="M0 0L10 10L0 20Z" />
              </svg>
            )}
          </button>
        </li>
      ))}
    </ul>
  );
}

function ExportDialog() {
  return (
    <div
      role="dialog"
      aria-label="Chat exportieren"
      className="absolute top-[647px] right-[51px] left-[51px] z-30 h-[280px] rounded-sm bg-[#2a3942] px-12 pt-[41px]"
    >
      <p className="text-[31px] leading-9 text-[#e9edef]">
        Das Hinzufügen von Medien erhöht die
        <br />
        Größe des Chat-Exports.
      </p>
      <div className="mt-12 flex gap-[50px] text-[28px] leading-8 font-medium whitespace-nowrap text-[#0fa888]">
        <button type="button">OHNE MEDIEN</button>
        <button type="button">EINSCHLIESSLICH MEDIEN</button>
      </div>
    </div>
  );
}

const Tile = ({ look, children }: { look: string; children: React.ReactNode }) => (
  <span className={`flex h-[87px] items-center justify-center overflow-hidden rounded-3xl ${look}`}>{children}</span>
);

const NearbyLogo = () => (
  <svg {...svgBase} viewBox="0 0 87 87" className="h-full w-full" fill="none" stroke="#4285f4" strokeWidth={4.2}>
    <path d="M24 51.5L35 40C40.5 34 47 34 52 39L54 41.5M63.5 35L52.5 46.5C47 52.5 40.5 52.5 35.5 47.5L33.5 45.5M23.5 34.5L29.5 41M57.5 45.5L64 52" />
    <path d="M13 50C18 84 68 84 74 50" stroke="#f1f1f1" strokeWidth={1} />
  </svg>
);

const ShareMeLogo = () => (
  <svg {...svgBase} viewBox="0 0 87 87" className="h-full w-full" fill="none">
    <path d="M14 41C16 30 24 29 28 29C38 29 39 40 44 48C38 34 24 34 14 41Z" fill="#8fd6fb" />
    <path d="M44 42C48 50 50 58 59 58C67 58 74 52 75 44C68 52 54 56 44 42Z" fill="#8fd6fb" />
    <path
      d="M33.5 56.5C22 62 13.5 53 13.5 43.5C13.5 34 20 29 28 29C44 29 42 58 59 58C69 58 75 51 75 43.5C75 32 64 26 54 31"
      stroke="white"
      strokeWidth={4}
      strokeLinecap="round"
    />
  </svg>
);

const OutlookLogo = () => (
  <svg {...svgBase} viewBox="0 0 83 87" className="h-full w-full">
    <path d="M64 42L70 45L64 52Z" fill="#123b6d" />
    <rect x={27} y={16} width={40} height={48} rx={2} fill="#1490df" />
    <path d="M29 16H65C66 16 67 17 67 18V23H27V18C27 17 28 16 29 16Z" fill="#0a5cab" />
    <rect x={40} y={23} width={13} height={14} fill="#28a8ea" />
    <rect x={53} y={23} width={14} height={14} fill="#50d9ff" />
    <rect x={27} y={37} width={13} height={14} fill="#0f5fb3" />
    <rect x={40} y={37} width={13} height={14} fill="#0f78d4" />
    <rect x={53} y={37} width={14} height={14} fill="#28a8ea" />
    <path d="M27 50H67V60H27Z" fill="#0a4f96" />
    <path d="M70 45V69C70 71 69 72 67 72H27C25 72 24 71 24 69V45L47 59Z" fill="#1b9be0" />
    <path d="M70 45V69C70 71 69 72 67 72L44 57Z" fill="#3ccbf4" />
    <path d="M24 69L47 56L68 72H27C25 72 24 71 24 69Z" fill="#2fb3ec" />
    <rect x={11} y={30} width={30} height={32} rx={2} fill="#000000" opacity={0.25} />
    <rect x={9} y={28} width={30} height={31} rx={2} fill="#1173cf" />
    <ellipse cx={24} cy={43.5} rx={6.2} ry={7.4} fill="none" stroke="white" strokeWidth={3.6} />
  </svg>
);

const BluetoothLogo = () => (
  <svg {...svgBase} viewBox="0 0 87 87" className="h-full w-full" fill="none" stroke="#eaf4ff" strokeWidth={4.2}>
    <path d="M29 32L58 55L43.5 65.5V22.5L58 33L29 56.5" strokeLinejoin="round" />
  </svg>
);

const DriveLogo = () => (
  <svg {...svgBase} viewBox="0 0 87 87" className="h-full w-full">
    <path d="M36 15H33.5L32 16L12 52V54H32L44 32.5Z" fill="#34a853" />
    <path d="M34 15H53L54.5 15.5L44 33L33 16Z" fill="#188038" />
    <path d="M53 15L55 16L76 52V54H56L43.7 32.5Z" fill="#fbbc04" />
    <path d="M12 54H32.5L22 72.5L20 71L12 56Z" fill="#1967d2" />
    <path d="M32 54H56.5L66 72.5H22Z" fill="#4285f4" />
    <path d="M56 54H76V56L68 71L66 72.5Z" fill="#ea4335" />
  </svg>
);

const GmailLogo = () => (
  <svg {...svgBase} viewBox="0 0 87 87" className="h-full w-full">
    <path d="M12.5 30L27.5 40V67H16C14 67 12.5 66 12.5 64Z" fill="#4285f4" />
    <path d="M76.5 30L61.5 40V67H73C75 67 76.5 66 76.5 64Z" fill="#34a853" />
    <path d="M61.5 26L65 22C70 17.5 76.5 20 76.5 27V32L61.5 43Z" fill="#fbbc04" />
    <path d="M27.5 26L44.5 38.5L61.5 26V43L44.5 55.5L27.5 43Z" fill="#ea4335" />
    <path d="M27.5 26L24 22C19 17.5 12.5 20 12.5 27V32L27.5 43Z" fill="#c5221f" />
  </svg>
);

const apps: { name: string; tile: React.ReactNode }[] = [
  { name: "Nearby Share", tile: <Tile look="w-[87px] bg-white"><NearbyLogo /></Tile> },
  { name: "ShareMe", tile: <Tile look="w-[87px] bg-[#03a9f4]"><ShareMeLogo /></Tile> },
  {
    name: "WhatsApp",
    tile: (
      <Tile look="w-[87px] bg-linear-to-b from-[#48ea64] to-[#28c840]">
        <FaWhatsapp aria-hidden="true" className="h-[70px] w-[70px] text-white" />
      </Tile>
    ),
  },
  { name: "Outlook", tile: <Tile look="w-[83px] bg-white"><OutlookLogo /></Tile> },
  { name: "Bluetooth", tile: <Tile look="w-[87px] bg-linear-to-br from-[#3693e2] to-[#216ac6]"><BluetoothLogo /></Tile> },
  {
    name: "Discord",
    tile: (
      <Tile look="w-[87px] bg-[#5865f2]">
        <FaDiscord aria-hidden="true" className="h-16 w-16 text-white" />
      </Tile>
    ),
  },
  { name: "Drive", tile: <Tile look="w-[87px] bg-white"><DriveLogo /></Tile> },
  { name: "Gmail", tile: <Tile look="w-[87px] bg-white"><GmailLogo /></Tile> },
];

function ShareSheet() {
  return (
    <div
      role="dialog"
      aria-label="Teilen"
      className="absolute inset-x-0 top-[330px] bottom-[88px] z-30 flex flex-col rounded-t-[44px] bg-[#222224] pt-[83px] pr-12 pb-[57px] pl-[51px]"
    >
      <div className="flex h-[120px] items-center rounded-3xl bg-[#2c2c2e] pr-8 pl-[21px]">
        <svg {...svgBase} viewBox="0 0 55 65" className="h-[65px] w-[55px]">
          <path d="M5 1H40L54 14V60C54 62 52 64 50 64H5C3 64 1 62 1 60V5C1 3 3 1 5 1Z" fill="white" stroke="#8fa5b3" strokeWidth={2} />
          <g fill="#9db2bf">
            <rect x={18} y={24} width={10} height={10} rx={2} />
            <circle cx={34} cy={29} r={5.2} />
            <rect x={18} y={35.5} width={10} height={10} rx={2} />
            <rect x={29} y={35.5} width={10} height={10} rx={2} />
          </g>
        </svg>
        <p className="ml-6 text-[29px] leading-9 whitespace-nowrap text-[#d2d2d3]">b3f7e5c8-4dd7-47b1-9b9f-2d60f0b15415</p>
      </div>

      <div className="mt-[37px] flex h-[79px] items-center">
        <div className="flex-1">
          <h2 className="text-[32px] leading-9 font-bold text-white">Objekte senden an</h2>
          <p className="mt-2 mb-[-8px] text-2xl leading-8 font-bold whitespace-nowrap text-[#8d8d8f]">Geräte können nicht gefunden werd...</p>
        </div>
        <button type="button" aria-label="Drucken" className="flex h-[79px] w-[118px] shrink-0 items-center justify-center rounded-full bg-[#323234]">
          <svg {...svgBase} viewBox="0 0 40 36" className="h-9 w-10" fill="none" stroke="#7b7b7d" strokeWidth={3} strokeLinejoin="round">
            <path d="M11.5 9V4.5C11.5 3 13 1.5 14.5 1.5H25.5C27 1.5 28.5 3 28.5 4.5V9M11.5 26H6C3 26 1.5 24.5 1.5 22V13C1.5 10 3 8.5 6 8.5H34C37 8.5 38.5 10 38.5 13V22C38.5 24.5 37 26 34 26H28.5" />
            <path d="M12 18.5H28V32C28 33.5 27 34.5 25.5 34.5H14.5C13 34.5 12 33.5 12 32ZM29 14.5H32" />
          </svg>
        </button>
        <button type="button" aria-label="Bildschirm" className="ml-5 flex h-[79px] w-[118px] shrink-0 items-center justify-center rounded-full bg-[#323234]">
          <svg {...svgBase} viewBox="0 0 38 33" className="h-[33px] w-[38px]" fill="none" stroke="#f0f0f0" strokeWidth={3} strokeLinecap="round">
            <rect x={1.5} y={1.5} width={35} height={23} rx={3.5} />
            <path d="M12 31H26" />
          </svg>
        </button>
      </div>

      <div className="mt-[45px] flex h-[118px] items-center">
        <span className="flex h-[118px] w-[118px] items-center justify-center rounded-full bg-linear-to-tr from-[#82adff] to-[#c9c3ff]">
          <svg {...svgBase} viewBox="0 0 50 46" className="h-[46px] w-[50px]" fill="none" stroke="white" strokeWidth={2.4} strokeLinejoin="round">
            <path d="M17 2H33C35 2 36 3 37 4L48 20C49 22 49 24 48 26L37 42C36 43 35 44 33 44H17V41L31 24C32 23 32 22 31 21L17 4Z" />
            <path d="M14 7L2 21C1 22 1 24 2 25L14 39" opacity={0.7} />
            <path d="M20 13L11 22C10 23 10 24 11 25L19 34" opacity={0.4} strokeWidth={3} />
          </svg>
        </span>
        <span className="ml-4 text-[25px] leading-8 text-[#a5a5a7]">Mi Share</span>
        <button type="button" className="ml-auto h-[75px] w-[221px] rounded-full bg-[#323234] text-[27px] leading-8 font-medium text-[#f2f2f2]">
          Einschalten
        </button>
      </div>

      <hr className="mt-[33px] border-t border-[#39393b]" />

      <ul className="mt-[43px] -mr-[22px] -ml-[23px] grid grid-cols-4 gap-y-4">
        {apps.map((a) => (
          <li key={a.name}>
            <button type="button" className="flex w-full flex-col items-center gap-5 text-[26px] leading-[30px] text-[#bcbcbd]">
              {a.tile}
              <span className="w-[120px]">{a.name}</span>
            </button>
          </li>
        ))}
      </ul>

      <div className="mt-[68px] flex justify-center gap-[11px]" aria-hidden="true">
        <span className="h-[11px] w-[11px] rounded-full bg-[#e8e8e8]" />
        <span className="h-[11px] w-[11px] rounded-full bg-[#69696a]" />
      </div>

      <button type="button" className="mx-1.5 mt-auto h-[100px] rounded-full bg-[#333335] text-[34px] leading-10 font-medium text-[#efefef]">
        Abbrechen
      </button>
    </div>
  );
}

/* ---------- Page ---------- */

export default function App() {
  return (
    <main className="grid min-h-screen w-full grid-cols-[771fr_54fr_771fr_65fr_771fr_62fr_771fr_63fr_768fr] bg-white font-['Roboto',sans-serif]">
      <Phone label="Schritt 1: Menü öffnen" time="12:18" battery={81} avatar="ml-1 h-16 w-[72px]" dots frame="col-start-1">
        <Frame at="top-[72px] right-0 h-[93px] w-[90px]" />
        <Arrow
          at="top-[182px] right-[6px] h-[151px] w-[64px]"
          box="0 0 64 151"
          points="32,5 61,75 47,75 47,147 17,147 17,75 3,75"
        />
      </Phone>

      <Phone
        label="Schritt 2: Mehr wählen"
        time="12:18"
        battery={81}
        data
        avatar="ml-[7px] h-[67px] w-[74px]"
        actions={false}
        cursor
        frame="col-start-3"
      >
        <Menu
          more
          look="right-[9px] left-[198px] bg-[#202c33]"
          items={["Gruppeninfo", "Gruppenmedien", "Suchen", "Benachrichtigungen stummschalten", "Hintergrund", "Mehr"]}
        />
        <Frame at="top-[549px] left-[204px] h-20 w-32" />
        <Arrow
          at="top-[571px] left-[372px] h-[50px] w-[197px]"
          box="0 0 197 50"
          points="3,25 98,3 98,14 193,14 193,36 98,36 98,47"
        />
      </Phone>

      <Phone
        label="Schritt 3: Chat exportieren"
        time="12:18"
        battery={80}
        avatar="ml-[7px] h-[66px] w-[70px]"
        actions={false}
        cursor
        frame="col-start-5"
      >
        <Menu
          look="right-0 left-[369px] bg-[#233138]"
          items={["Melden", "Gruppe verlassen", "Chat leeren", "Chat exportieren", "Verknüpfung hinzufügen"]}
        />
        <Frame at="top-[371px] left-[387px] h-16 w-[264px]" />
        <Arrow
          at="top-[377px] left-[207px] h-12 w-[176px]"
          box="0 0 176 48"
          points="173,24 88,4 88,14 4,14 4,34 88,34 88,44"
        />
      </Phone>

      <Phone
        label="Schritt 4: Ohne Medien"
        time="12:18"
        battery={80}
        avatar="ml-[7px] h-[65px] w-[74px]"
        dim
        frame="col-start-7"
        nav="h-[91px] bg-[#02060a]"
      >
        <ExportDialog />
        <Frame at="top-[794px] left-[88px] h-[67px] w-[205px]" />
        <Arrow
          at="top-[870px] left-[150px] h-[151px] w-[66px]"
          box="0 0 66 151"
          points="33,5 63,77 49,77 49,147 17,147 17,77 3,77"
        />
      </Phone>

      <Phone
        label="Schritt 5: App auswählen"
        time="12:19"
        battery={80}
        data
        avatar="ml-[7px] h-[72px] w-[74px]"
        dim
        covered
        frame="col-start-9 mt-[3px]"
        nav="h-[88px] bg-[#010508]"
      >
        <ShareSheet />
        <Frame at="top-[860px] left-[563px] h-[374px] w-[168px]" />
        <Arrow
          at="top-[1247px] left-[603px] h-[193px] w-[92px]"
          box="0 0 92 193"
          points="46,5 88,97 67,97 67,189 24,189 24,97 4,97"
        />
      </Phone>
    </main>
  );
}
